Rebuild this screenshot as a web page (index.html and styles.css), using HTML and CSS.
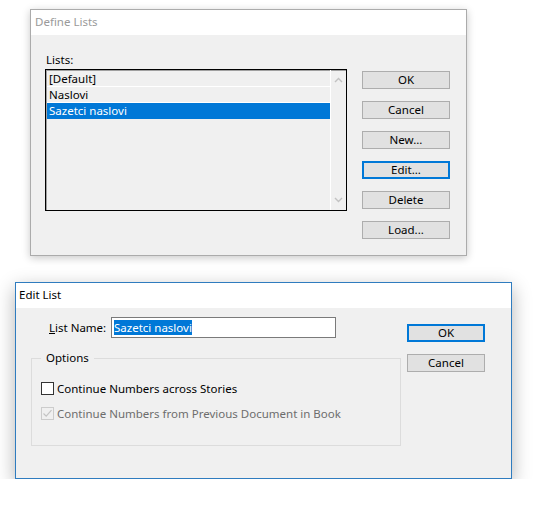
FILE: index.html
```html
<!DOCTYPE html>
<html>
<head>
<meta charset="utf-8">
<title>Define Lists</title>
<link rel="stylesheet" href="styles.css">
</head>
<body>
<div class="page">
  <div class="dlg dlg-define">
    <div class="titlebar inactive">Define Lists</div>
    <div class="dlg-body define-body">
      <div class="list-col">
        <div class="field-label">Lists:</div>
        <div class="listbox">
          <div class="items">
            <div class="item">[Default]</div>
            <div class="item">Naslovi</div>
            <div class="item selected">Sazetci naslovi</div>
          </div>
          <div class="scrollbar">
            <svg class="arrow" width="9" height="6" viewBox="0 0 9 6"><path d="M1 5 L4.5 1.5 L8 5" fill="none" stroke="#c2c2c2" stroke-width="1.4"/></svg>
            <svg class="arrow" width="9" height="6" viewBox="0 0 9 6"><path d="M1 1 L4.5 4.5 L8 1" fill="none" stroke="#c2c2c2" stroke-width="1.4"/></svg>
          </div>
        </div>
      </div>
      <div class="btn-col define-btns">
        <div class="btn">OK</div>
        <div class="btn">Cancel</div>
        <div class="btn">New...</div>
        <div class="btn focused">Edit...</div>
        <div class="btn">Delete</div>
        <div class="btn">Load...</div>
      </div>
    </div>
  </div>

  <div class="dlg dlg-edit">
    <div class="titlebar">Edit List</div>
    <div class="dlg-body edit-body">
      <div class="edit-left">
        <div class="name-row">
          <span class="name-label"><u>L</u>ist Name:</span>
          <div class="textbox"><span class="sel">Sazetci naslovi</span></div>
        </div>
        <fieldset class="group">
          <legend>Options</legend>
          <div class="check-row">
            <span class="checkbox"></span>
            <span>Continue Numbers across Stories</span>
          </div>
          <div class="check-row disabled">
            <span class="checkbox checked">
              <svg width="11" height="11" viewBox="0 0 11 11"><path d="M1.5 5.5 L4.2 8.2 L9.5 2.2" fill="none" stroke="#c4c4c4" stroke-width="1.2"/></svg>
            </span>
            <span>Continue Numbers from Previous Document in Book</span>
          </div>
        </fieldset>
      </div>
      <div class="btn-col edit-btns">
        <div class="btn focused">OK</div>
        <div class="btn">Cancel</div>
      </div>
    </div>
  </div>
</div>
</body>
</html>
```

FILE: styles.css
```css
* { box-sizing: border-box; }
html, body { margin: 0; padding: 0; background: #ffffff; }
body {
  font-family: "Noto Sans", "Open Sans", sans-serif;
  font-size: 11.5px;
  color: #000;
}
.page {
  display: flex;
  flex-direction: column;
  align-items: flex-start;
}
.dlg {
  background: #f0f0f0;
  display: flex;
  flex-direction: column;
}
.dlg-define {
  margin: 9px 0 0 30px;
  width: 437px;
  height: 247px;
  border: 1px solid #ababab;
  box-shadow: 0 2px 8px rgba(0,0,0,0.22);
}
.dlg-edit {
  margin: 26px 0 0 15px;
  width: 497px;
  height: 197px;
  border: 1px solid #2f7cbf;
  box-shadow: 0 6px 18px rgba(0,0,0,0.3);
}
.titlebar {
  height: 25px;
  line-height: 24px;
  background: #fff;
  padding-left: 3px;
  color: #000;
}
.titlebar.inactive { color: #9a9a9a; padding-left: 4px; }
.dlg-body { flex: 1; display: flex; }

.define-body { padding: 17px 0 0 14px; gap: 15px; }
.list-col { width: 302px; display: flex; flex-direction: column; }
.field-label { line-height: 15px; height: 15px; margin-bottom: 2px; padding-left: 1px; }
.listbox {
  height: 142px;
  border: 1px solid #000;
  box-shadow: inset 1px 1px 0 #a0a0a0;
  display: flex;
  padding: 1px 0 0 1px;
}
.items { flex: 1; display: flex; flex-direction: column; }
.item {
  height: 16px;
  line-height: 15px;
  border-bottom: 1px solid #fff;
  padding-left: 2px;
  white-space: nowrap;
}
.item.selected { background: #0078d7; color: #fff; border-bottom-color: #0078d7; }
.scrollbar {
  width: 16px;
  border-left: 1px solid #fff;
  margin-top: -1px;
  display: flex;
  flex-direction: column;
  justify-content: space-between;
  align-items: center;
  padding: 7px 0 7px 0;
}
.arrow { display: block; }

.btn-col { display: flex; flex-direction: column; gap: 12px; }
.define-btns { padding-top: 19px; }
.btn {
  height: 18px;
  line-height: 16px;
  background: #e1e1e1;
  border: 1px solid #adadad;
  text-align: center;
}
.define-btns .btn { width: 88px; }
.btn.focused { border: 2px solid #0078d7; line-height: 14px; }

.edit-body { padding: 9px 0 0 15px; gap: 6px; }
.edit-left { width: 370px; display: flex; flex-direction: column; }
.name-row { display: flex; align-items: center; height: 21px; padding-left: 18px; }
.name-label { width: 62px; }
.textbox {
  width: 225px;
  height: 21px;
  background: #fff;
  border: 1px solid #7a7a7a;
  padding: 2px 0 0 2px;
  line-height: 15px;
}
.sel { background: #0078d7; color: #fff; display: inline-block; height: 15px; }
.group {
  margin: 13px 0 0 0;
  padding: 0 0 24px 9px;
  border: 1px solid #dcdcdc;
  min-width: 0;
}
.group legend {
  padding: 0 5px;
  line-height: 14px;
  margin-bottom: 15px;
}
.check-row {
  display: flex;
  align-items: center;
  height: 16px;
  gap: 3px;
}
.check-row + .check-row { margin-top: 9px; }
.checkbox {
  width: 13px;
  height: 13px;
  border: 1px solid #333;
  background: #fff;
  display: flex;
  align-items: center;
  justify-content: center;
}
.checkbox.checked { border-color: #cccccc; background: #f0f0f0; }
.checkbox svg { display: block; }
.disabled { color: #6d6d6d; }
.edit-btns { padding-top: 7px; }
.edit-btns .btn { width: 78px; }
```
